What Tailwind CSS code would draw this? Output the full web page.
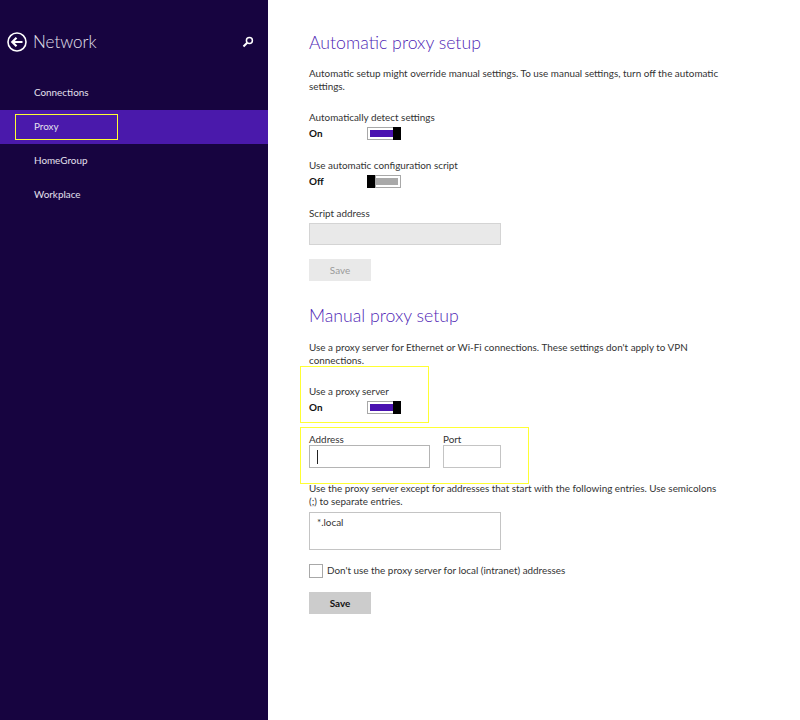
<!DOCTYPE html>
<html lang="en">
<head>
    <meta charset="UTF-8">
    <title>Network</title>
    <script src="https://cdn.jsdelivr.net/npm/@tailwindcss/browser@4"></script>
</head>
<body class="bg-white antialiased font-['Lato',sans-serif]">
<div class="relative flex w-[800px] h-[720px] overflow-hidden">

    <!-- Sidebar -->
    <aside class="w-[268px] h-full shrink-0 bg-[#170440] text-[#e4e0ee]">
        <div class="flex items-center h-[28px] mt-[28px] pl-[7px] pr-[14px]">
            <svg class="w-[20px] h-[20px] shrink-0" viewBox="0 0 20 20" fill="none" stroke="#ffffff">
                <circle cx="10" cy="10" r="9" stroke-width="1.6"/>
                <path d="M15.5 10H6M9.5 5.8L5.3 10l4.2 4.2" stroke-width="2.2"/>
            </svg>
            <span class="ml-[6px] text-[17px] font-light leading-[28px]">Network</span>
            <svg class="w-[12px] h-[12px] ml-auto" viewBox="0 0 12 12" fill="none" stroke="#ffffff">
                <circle cx="7.4" cy="4.6" r="3" stroke-width="1.5"/>
                <path d="M5.2 6.8L1.5 10.5" stroke-width="2"/>
            </svg>
        </div>
        <nav class="mt-[20px] text-[9.9px]">
            <div class="h-[34px] pl-[34px] leading-[33px]">Connections</div>
            <div class="h-[34px] pl-[34px] leading-[33px] bg-[#4a19ab]">Proxy</div>
            <div class="h-[34px] pl-[34px] leading-[33px]">HomeGroup</div>
            <div class="h-[34px] pl-[34px] leading-[33px]">Workplace</div>
        </nav>
    </aside>

    <!-- Settings -->
    <main class="flex-1 pl-[41px] pt-[28px] text-[9.9px] leading-[13px] text-[#333333]">
        <h2 class="text-[17.7px] leading-[29px] font-light text-[#4f1fb5]">Automatic proxy setup</h2>

        <p class="mt-[10px] w-[420px] leading-[13px]">Automatic setup might override manual settings. To use manual settings, turn off the automatic settings.</p>

        <div class="mt-[18px]">Automatically detect settings</div>
        <div class="flex items-center mt-[3px] h-[13px]">
            <span class="w-[58px] font-bold text-[#111111]">On</span>
            <div class="flex w-[34px] h-[13px] border border-[#a8a8a8] pl-[2px] py-[2px] pr-0">
                <div class="flex-1 bg-[#4a12b0]"></div>
            </div>
            <div class="w-[8px] h-[13px] bg-black ml-[-8px]"></div>
        </div>

        <div class="mt-[19px]">Use automatic configuration script</div>
        <div class="flex items-center mt-[3px] h-[13px]">
            <span class="w-[58px] font-bold text-[#111111]">Off</span>
            <div class="w-[8px] h-[13px] bg-black"></div>
            <div class="flex w-[26px] h-[13px] border border-[#a8a8a8] pr-[2px] py-[2px]">
                <div class="flex-1 bg-[#a9a9a9]"></div>
            </div>
        </div>

        <div class="mt-[19px]">Script address</div>
        <div class="mt-[3px] w-[192px] h-[22px] bg-[#e9e9e9] border border-[#d4d4d4]"></div>
        <div class="mt-[14px] w-[62px] h-[22px] bg-[#e9e9e9] text-[#9a9a9a] text-center leading-[22px]">Save</div>

        <h2 class="mt-[20px] text-[17.7px] leading-[29px] font-light text-[#4f1fb5]">Manual proxy setup</h2>

        <p class="mt-[11px] w-[420px] leading-[13px]">Use a proxy server for Ethernet or Wi-Fi connections. These settings don't apply to VPN connections.</p>

        <div class="mt-[18px]">Use a proxy server</div>
        <div class="flex items-center mt-[3px] h-[13px]">
            <span class="w-[58px] font-bold text-[#111111]">On</span>
            <div class="flex w-[34px] h-[13px] border border-[#a8a8a8] pl-[2px] py-[2px]">
                <div class="flex-1 bg-[#4a12b0]"></div>
            </div>
            <div class="w-[8px] h-[13px] bg-black ml-[-8px]"></div>
        </div>

        <div class="flex gap-[13px] mt-[19px]">
            <div>
                <div>Address</div>
                <div class="mt-[-1px] w-[121px] h-[23px] border border-[#b4b4b4] flex items-center pl-[7px]">
                    <div class="w-px h-[14px] bg-[#222222]"></div>
                </div>
            </div>
            <div>
                <div>Port</div>
                <div class="mt-[-1px] w-[58px] h-[23px] border border-[#c4c4c4]"></div>
            </div>
        </div>

        <p class="mt-[14px] w-[412px] leading-[13px]">Use the proxy server except for addresses that start with the following entries. Use semicolons (;) to separate entries.</p>

        <div class="mt-[4px] w-[192px] h-[38px] border border-[#c4c4c4] pl-[7px] pt-[3px]">*.local</div>

        <div class="flex items-center mt-[13px] h-[15px]">
            <div class="w-[14px] h-[14px] border border-[#a8a8a8]"></div>
            <span class="ml-[4px]">Don't use the proxy server for local (intranet) addresses</span>
        </div>

        <div class="mt-[14px] w-[62px] h-[22px] bg-[#cccccc] text-[#111111] font-bold text-center leading-[22px]">Save</div>
    </main>

    <!-- Yellow callouts drawn over the screenshot -->
    <div class="absolute left-[15px] top-[114px] w-[103px] h-[26px] border border-[#ffff33]"></div>
    <div class="absolute left-[300px] top-[366px] w-[129px] h-[57px] border border-[#ffff33]"></div>
    <div class="absolute left-[300px] top-[427px] w-[229px] h-[57px] border border-[#ffff33]"></div>
</div>
</body>
</html>
